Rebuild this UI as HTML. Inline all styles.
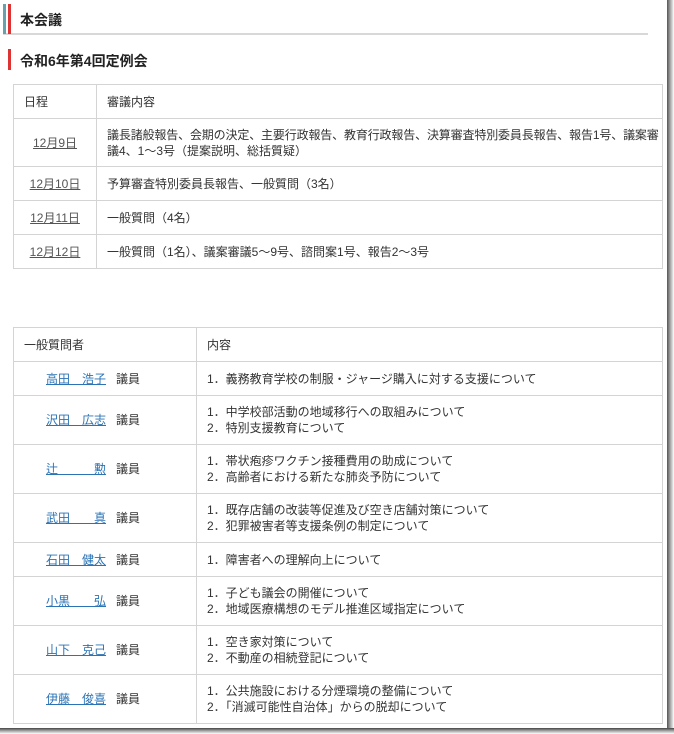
<!DOCTYPE html>
<html><head><meta charset="utf-8"><style>
*{margin:0;padding:0;box-sizing:border-box}
body{width:674px;height:734px;background:#fff;font-family:"Liberation Sans","Noto Sans CJK JP",sans-serif;color:#333;font-size:12px;position:relative;overflow:hidden}
.shadowR{position:absolute;left:667px;top:0;width:7px;height:734px;background:linear-gradient(90deg,#555,#999 40%,#fff)}
.shadowB{position:absolute;left:0;top:728px;width:674px;height:6px;background:linear-gradient(180deg,#444,#aaa 50%,#fff)}
.h1{position:absolute;left:3px;top:4px;width:645px;height:31px;border-bottom:2px solid #d8d8d8}
.h1 .b1{position:absolute;left:0;top:0;width:3px;height:30px;background:#6a9fae}
.h1 .b2{position:absolute;left:5px;top:0;width:3px;height:30px;background:#d33}
.h1 span{position:absolute;left:17px;top:6px;font-size:14px;font-weight:bold;color:#222}
.h2{position:absolute;left:8px;top:49px;width:3px;height:21px;background:#d33}
.h2t{position:absolute;left:20px;top:51px;font-size:14px;font-weight:bold;color:#222}
table{position:absolute;border-collapse:collapse;left:13px;width:650px;table-layout:fixed}
td{border:1px solid #d4d4d4;padding:0 10px;vertical-align:middle;line-height:16px}
a.d{color:#555;text-decoration:underline}
a.n{color:#2a73b5;text-decoration:underline}
.g{margin-left:10px}
.nw{white-space:nowrap;letter-spacing:-0.15px;display:inline-block}
</style></head><body>
<div class="h1"><div class="b1"></div><div class="b2"></div><span>本会議</span></div>
<div class="h2"></div><div class="h2t">令和6年第4回定例会</div>
<table style="top:84px">
<tr style="height:34px"><td style="width:83px">日程</td><td>審議内容</td></tr>
<tr style="height:48px"><td style="text-align:center"><a class="d">12月9日</a></td><td style="padding-right:2px"><span class="nw">議長諸般報告、会期の決定、主要行政報告、教育行政報告、決算審査特別委員長報告、報告1号、議案審</span><br>議4、1～3号（提案説明、総括質疑）</td></tr>
<tr style="height:34px"><td style="text-align:center"><a class="d">12月10日</a></td><td>予算審査特別委員長報告、一般質問（3名）</td></tr>
<tr style="height:34px"><td style="text-align:center"><a class="d">12月11日</a></td><td>一般質問（4名）</td></tr>
<tr style="height:34px"><td style="text-align:center"><a class="d">12月12日</a></td><td>一般質問（1名）、議案審議5～9号、諮問案1号、報告2～3号</td></tr>
</table>
<table style="top:327px">
<tr style="height:34px"><td style="width:183px">一般質問者</td><td>内容</td></tr>
<tr style="height:34px"><td style="padding-left:32px"><a class="n">高田　浩子</a><span class="g">議員</span></td><td>1．義務教育学校の制服・ジャージ購入に対する支援について</td></tr>
<tr style="height:49px"><td style="padding-left:32px"><a class="n">沢田　広志</a><span class="g">議員</span></td><td>1．中学校部活動の地域移行への取組みについて<br>2．特別支援教育について</td></tr>
<tr style="height:49px"><td style="padding-left:32px"><a class="n">辻　　　勲</a><span class="g">議員</span></td><td>1．帯状疱疹ワクチン接種費用の助成について<br>2．高齢者における新たな肺炎予防について</td></tr>
<tr style="height:49px"><td style="padding-left:32px"><a class="n">武田　　真</a><span class="g">議員</span></td><td>1．既存店舗の改装等促進及び空き店舗対策について<br>2．犯罪被害者等支援条例の制定について</td></tr>
<tr style="height:34px"><td style="padding-left:32px"><a class="n">石田　健太</a><span class="g">議員</span></td><td>1．障害者への理解向上について</td></tr>
<tr style="height:49px"><td style="padding-left:32px"><a class="n">小黒　　弘</a><span class="g">議員</span></td><td>1．子ども議会の開催について<br>2．地域医療構想のモデル推進区域指定について</td></tr>
<tr style="height:49px"><td style="padding-left:32px"><a class="n">山下　克己</a><span class="g">議員</span></td><td>1．空き家対策について<br>2．不動産の相続登記について</td></tr>
<tr style="height:49px"><td style="padding-left:32px"><a class="n">伊藤　俊喜</a><span class="g">議員</span></td><td>1．公共施設における分煙環境の整備について<br>2．「消滅可能性自治体」からの脱却について</td></tr>
</table>
<div class="shadowR"></div><div class="shadowB"></div>
</body></html>
